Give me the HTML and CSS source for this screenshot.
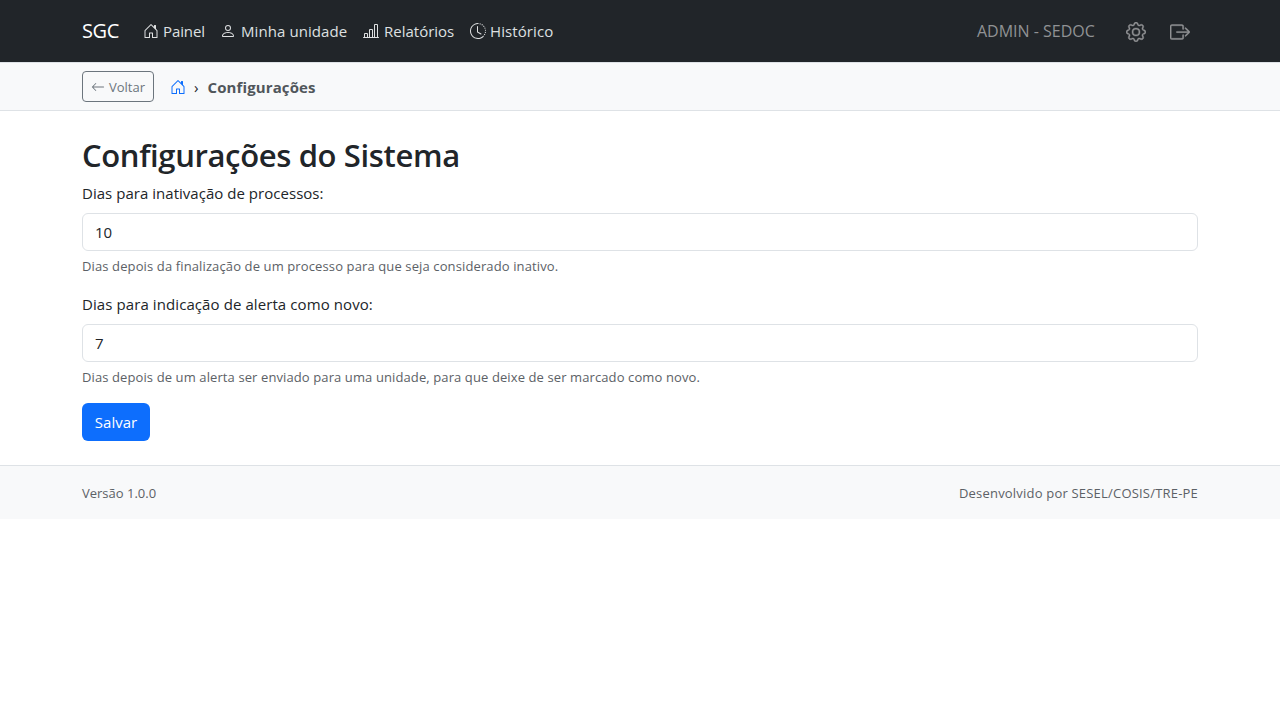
FILE: index.html
```html
<!DOCTYPE html>
<html lang="pt-BR">
<head>
<meta charset="utf-8">
<title>SGC - Configurações</title>
<link rel="stylesheet" href="styles.css">
</head>
<body>
<svg class="sprite" aria-hidden="true">
  <symbol id="house" viewBox="0 0 16 16"><path d="M8.354 1.146a.5.5 0 0 0-.708 0l-6 6A.5.5 0 0 0 1.5 7.5v7a.5.5 0 0 0 .5.5h4.500a.5.5 0 0 0 .5-.5v-4h2v4a.5.5 0 0 0 .5.5H14a.5.5 0 0 0 .5-.5v-7a.5.5 0 0 0-.146-.354L13 5.793V2.500a.5.5 0 0 0-.5-.5h-1a.5.5 0 0 0-.5.5v1.293zM2.500 14V7.707l5.500-5.500 5.500 5.500V14H10v-4a.5.5 0 0 0-.5-.5h-3a.5.5 0 0 0-.5.5v4z"/></symbol>
  <symbol id="person" viewBox="0 0 16 16"><path d="M8 8a3 3 0 1 0 0-6 3 3 0 0 0 0 6m2-3a2 2 0 1 1-4 0 2 2 0 0 1 4 0m4 8c0 1-1 1-1 1H3s-1 0-1-1 1-4 6-4 6 3 6 4m-1-.004c-.001-.246-.154-.986-.832-1.664C11.516 10.680 10.289 10 8 10s-3.516.68-4.168 1.332c-.678.678-.83 1.418-.832 1.664z"/></symbol>
  <symbol id="bars" viewBox="0 0 16 16"><path d="M11 2a1 1 0 0 1 1-1h2a1 1 0 0 1 1 1v12h.5a.5.5 0 0 1 0 1H.5a.5.5 0 0 1 0-1H1v-3a1 1 0 0 1 1-1h2a1 1 0 0 1 1 1v3h1V7a1 1 0 0 1 1-1h2a1 1 0 0 1 1 1v7h1zm1 12h2V2h-2zm-3 0V7H7v7zm-5 0v-3H2v3z"/></symbol>
  <symbol id="history" viewBox="0 0 16 16"><path d="M8.515 1.019A7 7 0 0 0 8 1V0a8 8 0 0 1 .589.022zm2.004.45a7 7 0 0 0-.985-.299l.219-.976q.576.129 1.126.342zm1.370.71a7 7 0 0 0-.439-.27l.493-.87a8 8 0 0 1 .979.654l-.615.789a7 7 0 0 0-.418-.302zm1.834 1.790a7 7 0 0 0-.653-.796l.724-.69q.406.429.747.91zm.744 1.352a7 7 0 0 0-.214-.468l.893-.45a8 8 0 0 1 .45 1.088l-.95.313a7 7 0 0 0-.179-.483m.53 2.507a7 7 0 0 0-.1-1.025l.985-.17q.1.58.116 1.170zm-.131 1.538q.05-.254.081-.51l.993.123a8 8 0 0 1-.23 1.155l-.964-.267q.069-.247.12-.501m-.952 2.379q.276-.436.486-.908l.914.405q-.24.54-.555 1.038zm-.964 1.205q.183-.183.35-.378l.758.653a8 8 0 0 1-.401.432z"/><path d="M8 1a7 7 0 1 0 4.950 11.950l.707.707A8.001 8.001 0 1 1 8 0z"/><path d="M7.500 3a.5.5 0 0 1 .5.5v5.210l3.248 1.856a.5.5 0 0 1-.496.868l-3.500-2A.5.5 0 0 1 7 9V3.500a.5.5 0 0 1 .5-.5"/></symbol>
  <symbol id="gear" viewBox="0 0 16 16"><path d="M8 4.754a3.246 3.246 0 1 0 0 6.492 3.246 3.246 0 0 0 0-6.492M5.754 8a2.246 2.246 0 1 1 4.492 0 2.246 2.246 0 0 1-4.492 0"/><path d="M9.796 1.343c-.527-1.790-3.065-1.790-3.592 0l-.094.319a.873.873 0 0 1-1.255.52l-.292-.16c-1.640-.892-3.433.902-2.540 2.541l.159.292a.873.873 0 0 1-.52 1.255l-.319.094c-1.790.527-1.790 3.065 0 3.592l.319.094a.873.873 0 0 1 .52 1.255l-.16.292c-.892 1.640.901 3.434 2.541 2.540l.292-.159a.873.873 0 0 1 1.255.52l.094.319c.527 1.790 3.065 1.790 3.592 0l.094-.319a.873.873 0 0 1 1.255-.52l.292.16c1.640.893 3.434-.902 2.540-2.541l-.159-.292a.873.873 0 0 1 .52-1.255l.319-.094c1.790-.527 1.790-3.065 0-3.592l-.319-.094a.873.873 0 0 1-.52-1.255l.16-.292c.893-1.640-.902-3.433-2.541-2.540l-.292.159a.873.873 0 0 1-1.255-.52zm-2.633.283c.246-.835 1.428-.835 1.674 0l.094.319a1.873 1.873 0 0 0 2.693 1.115l.291-.16c.764-.415 1.600.42 1.184 1.185l-.159.292a1.873 1.873 0 0 0 1.116 2.692l.318.094c.835.246.835 1.428 0 1.674l-.319.094a1.873 1.873 0 0 0-1.115 2.693l.16.291c.415.764-.42 1.600-1.185 1.184l-.291-.159a1.873 1.873 0 0 0-2.693 1.116l-.094.318c-.246.835-1.428.835-1.674 0l-.094-.319a1.873 1.873 0 0 0-2.692-1.115l-.292.16c-.764.415-1.600-.42-1.184-1.185l.159-.291A1.873 1.873 0 0 0 1.945 8.930l-.319-.094c-.835-.246-.835-1.428 0-1.674l.319-.094A1.873 1.873 0 0 0 3.060 4.377l-.16-.292c-.415-.764.42-1.600 1.185-1.184l.292.159a1.873 1.873 0 0 0 2.692-1.115z"/></symbol>
  <symbol id="exit" viewBox="0 0 16 16"><path d="M10 12.500a.5.5 0 0 1-.5.5h-8a.5.5 0 0 1-.5-.5v-9a.5.5 0 0 1 .5-.5h8a.5.5 0 0 1 .5.5v2a.5.5 0 0 0 1 0v-2A1.500 1.500 0 0 0 9.500 2h-8A1.500 1.500 0 0 0 0 3.500v9A1.500 1.500 0 0 0 1.500 14h8a1.500 1.500 0 0 0 1.500-1.500v-2a.5.5 0 0 0-1 0z"/><path d="M15.854 8.354a.5.5 0 0 0 0-.708l-3-3a.5.5 0 0 0-.708.708L14.293 7.500H5.500a.5.5 0 0 0 0 1h8.793l-2.147 2.146a.5.5 0 0 0 .708.708z"/></symbol>
  <symbol id="arrow" viewBox="0 0 16 16"><path d="M15 8a.5.5 0 0 0-.5-.5H2.707l3.147-3.146a.5.5 0 1 0-.708-.708l-4 4a.5.5 0 0 0 0 .708l4 4a.5.5 0 0 0 .708-.708L2.707 8.500H14.500A.5.5 0 0 0 15 8"/></symbol>
</svg>
<header class="navbar">
  <div class="container navbar-row">
    <a class="brand">SGC</a>
    <nav class="nav">
      <a class="nav-link nav-panel"><svg class="icon"><use href="#house"/></svg><span>Painel</span></a>
      <a class="nav-link nav-unit"><svg class="icon"><use href="#person"/></svg><span>Minha unidade</span></a>
      <a class="nav-link nav-reports"><svg class="icon"><use href="#bars"/></svg><span>Relatórios</span></a>
      <a class="nav-link nav-history"><svg class="icon"><use href="#history"/></svg><span>Histórico</span></a>
    </nav>
    <div class="user">
      <span class="user-name">ADMIN - SEDOC</span>
      <svg class="icon-lg"><use href="#gear"/></svg>
      <svg class="icon-lg"><use href="#exit"/></svg>
    </div>
  </div>
</header>
<div class="subbar">
  <div class="container subbar-row">
    <button class="btn-back" type="button"><svg class="icon-sm"><use href="#arrow"/></svg><span>Voltar</span></button>
    <div class="breadcrumb">
      <svg class="icon crumb-home"><use href="#house"/></svg>
      <span class="crumb-sep">›</span>
      <span class="crumb-current">Configurações</span>
    </div>
  </div>
</div>
<main class="container main">
  <h2 class="title">Configurações do Sistema</h2>
  <form>
    <div class="field">
      <label class="label label-inactive" for="inactive">Dias para inativação de processos:</label>
      <input class="input" id="inactive" value="10">
      <div class="hint hint-inactive">Dias depois da finalização de um processo para que seja considerado inativo.</div>
    </div>
    <div class="field">
      <label class="label label-alert" for="alert">Dias para indicação de alerta como novo:</label>
      <input class="input" id="alert" value="7">
      <div class="hint hint-alert">Dias depois de um alerta ser enviado para uma unidade, para que deixe de ser marcado como novo.</div>
    </div>
    <button class="btn-save" type="button">Salvar</button>
  </form>
</main>
<footer class="footer">
  <div class="container footer-row">
    <span class="version">Versão 1.0.0</span>
    <span class="credit">Desenvolvido por SESEL/COSIS/TRE-PE</span>
  </div>
</footer>
</body>
</html>
```
FILE: styles.css
```css
* { box-sizing: border-box; }
body {
  margin: 0;
  font-family: "Segoe UI", "Open Sans", "Noto Sans", sans-serif;
  font-size: 15px;
  line-height: 24px;
  color: #212529;
  background: #fff;
}
button, input { font: inherit; }
.sprite { display: none; }
.container { width: 1116px; margin: 0 auto; }
svg { fill: currentColor; flex: none; }
.icon { width: 16px; height: 16px; }
.icon-sm { width: 14px; height: 14px; }
.icon-lg { width: 20px; height: 20px; margin-top: 1px; stroke: currentColor; stroke-width: .3px; overflow: visible; }

.navbar { height: 62px; background: #212529; }
.navbar-row { display: flex; align-items: center; height: 62px; }
.brand { width: 61px; font-size: 20px; line-height: 30px; color: #fff; letter-spacing: -.4px; }
.nav { display: flex; color: #dee0e1; }
.nav-link { display: flex; align-items: center; gap: 4px; white-space: nowrap; }
.nav-panel { width: 77px; letter-spacing: -.1px; }
.nav-unit { width: 143px; gap: 5px; letter-spacing: .08px; }
.nav-reports { width: 107px; gap: 5px; }
.nav-history { letter-spacing: .1px; }
.user { display: flex; align-items: center; gap: 24px; margin-left: auto; padding-right: 8px; color: #909294; }
.user-name { width: 125px; font-size: 16px; white-space: nowrap; }

.subbar { height: 49px; background: #f8f9fa; border-top: 1px solid #dee2e6; border-bottom: 1px solid #dee2e6; }
.subbar-row { display: flex; align-items: center; gap: 16px; height: 47px; }
.btn-back {
  display: flex; align-items: center; gap: 4px;
  width: 72px; height: 31px; padding: 1px 8px 0;
  border: 1px solid #6c757d; border-radius: 4px;
  background: transparent; color: #6c757d;
  font-size: 13px; line-height: 21px;
}
.breadcrumb { display: flex; align-items: center; padding-top: 1px; }
.crumb-home { color: #0d6efd; }
.crumb-sep { width: 21.500px; padding-left: 8px; color: #212529; }
.crumb-current { font-weight: 700; color: #50565b; letter-spacing: .12px; }

.main { padding: 25px 0 24px; }
.title { margin: 0 0 7px; font-size: 31px; line-height: 38px; font-weight: 600; letter-spacing: -.36px; white-space: nowrap; }
.field { margin-bottom: 16px; }
.label { display: block; margin-bottom: 8px; }
.label-inactive { letter-spacing: .03px; }
.label-alert { letter-spacing: .09px; }
.label, .hint { white-space: nowrap; }
.input {
  display: block; width: 100%; height: 38px; padding: 6px 12px;
  border: 1px solid #dee2e6; border-radius: 6px;
  color: #212529; background: #fff;
}
.hint { margin-top: 4px; height: 21px; font-size: 13px; line-height: 23px; color: #5c6166; letter-spacing: .12px; }
.hint-alert { letter-spacing: .105px; }
.btn-save {
  display: block; width: 68px; height: 38px; padding: 0;
  border: 0; border-radius: 6px; background: #0d6efd; color: #fff;
}
.footer { height: 54px; background: #f8f9fa; border-top: 1px solid #dee2e6; }
.footer-row { display: flex; justify-content: space-between; align-items: center; height: 53px; padding-top: 1px; font-size: 13px; color: #5c6166; }
.credit { letter-spacing: .2px; }
```
